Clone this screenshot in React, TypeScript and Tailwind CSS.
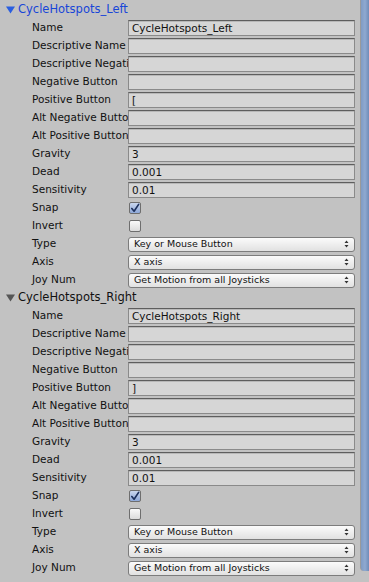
import { ReactNode } from "react";

type Field =
  | { label: string; kind: "text"; value?: string }
  | { label: string; kind: "check"; checked: boolean }
  | { label: string; kind: "select"; value: string };

const fields = (name: string, pos: string): Field[] => [
  { label: "Name", kind: "text", value: name },
  { label: "Descriptive Name", kind: "text" },
  { label: "Descriptive Negative Name", kind: "text" },
  { label: "Negative Button", kind: "text" },
  { label: "Positive Button", kind: "text", value: pos },
  { label: "Alt Negative Button", kind: "text" },
  { label: "Alt Positive Button", kind: "text" },
  { label: "Gravity", kind: "text", value: "3" },
  { label: "Dead", kind: "text", value: "0.001" },
  { label: "Sensitivity", kind: "text", value: "0.01" },
  { label: "Snap", kind: "check", checked: true },
  { label: "Invert", kind: "check", checked: false },
  { label: "Type", kind: "select", value: "Key or Mouse Button" },
  { label: "Axis", kind: "select", value: "X axis" },
  { label: "Joy Num", kind: "select", value: "Get Motion from all Joysticks" },
];

const Row = ({ label, children }: { label: string; children: ReactNode }) => (
  <div className="flex h-[18px] items-center">
    <div className="w-[96px] pl-[32px] box-content shrink-0 overflow-hidden whitespace-nowrap text-[10.5px] text-[#111]">
      {label}
    </div>
    <div className="flex-1 flex items-center">{children}</div>
  </div>
);

const Control = ({ f }: { f: Field }) => {
  if (f.kind === "text") {
    return (
      <div className="h-[16px] w-full border border-[#8a8a8a] border-t-[#5e5e5e] bg-[#d6d6d6] shadow-[inset_0_1px_0_#b8b8b8] pl-[3px] text-[10.5px] leading-[14px] text-[#111] whitespace-nowrap overflow-hidden">
        {f.value}
      </div>
    );
  }
  if (f.kind === "check") {
    return (
      <div
        className={`ml-[1px] h-[12px] w-[12px] rounded-[2px] border border-[#6e6e6e] flex items-center justify-center ${
          f.checked ? "bg-gradient-to-b from-[#c9d6ee] to-[#8ea8d8]" : "bg-gradient-to-b from-[#fafafa] to-[#dcdcdc]"
        }`}
      >
        {f.checked && (
          <svg width="11" height="11" viewBox="0 0 11 11">
            <path d="M2 5.5 L4.5 8.5 L9.5 1" stroke="#1b2f5c" strokeWidth="1.8" fill="none" strokeLinecap="round" strokeLinejoin="round" />
          </svg>
        )}
      </div>
    );
  }
  return (
    <div className="h-[15px] w-full rounded-[3px] border border-[#7c7c7c] bg-gradient-to-b from-[#fbfbfb] to-[#e1e1e1] flex items-center justify-between pl-[5px] pr-[5px] text-[9.5px] text-[#111] whitespace-nowrap">
      <span>{f.value}</span>
      <svg width="5" height="8" viewBox="0 0 5 8">
        <path d="M0.5 3 L2.5 0.5 L4.5 3 Z M0.5 5 L2.5 7.5 L4.5 5 Z" fill="#333" />
      </svg>
    </div>
  );
};

const Section = ({ title, active, pos }: { title: string; active: boolean; pos: string }) => (
  <div>
    <div className="flex h-[18px] items-center pl-[6px]">
      <svg width="9" height="8" viewBox="0 0 9 8" className="mr-[3px]">
        <path d="M0 0.5 L9 0.5 L4.5 7.5 Z" fill={active ? "#2a5ee0" : "#555"} />
      </svg>
      <span className={`text-[11.5px] ${active ? "text-[#1846d8]" : "text-[#111]"}`}>{title}</span>
    </div>
    {fields(title, pos).map((f) => (
      <Row key={f.label} label={f.label}>
        <Control f={f} />
      </Row>
    ))}
  </div>
);

export default function App() {
  return (
    <div
      className="w-[369px] h-[582px] bg-[#c2c2c2] flex overflow-hidden"
      style={{ fontFamily: '"DejaVu Sans", "Liberation Sans", sans-serif' }}
    >
      <div className="flex-1 pt-[1px] pr-[5px]">
        <Section title="CycleHotspots_Left" active pos="[" />
        <Section title="CycleHotspots_Right" active={false} pos="]" />
      </div>
      <div className="w-[9px] h-[571px] border-l border-[#9a9a9a] bg-gradient-to-r from-[#7f9bc4] via-[#8fa9d0] to-[#6f8cb8] rounded-bl-[4px]" />
    </div>
  );
}
